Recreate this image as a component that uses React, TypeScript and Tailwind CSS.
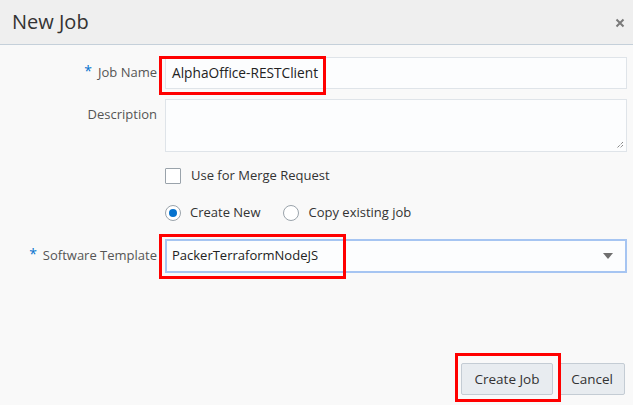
import React from "react";

export default function App() {
  return (
    <div
      className="relative w-[633px] h-[405px] overflow-hidden bg-[#f9f9f9] text-[#333]"
      style={{ fontFamily: '"Open Sans", "Noto Sans", sans-serif' }}
    >
      <div className="h-[45px] bg-[#efefef] border-b border-[#c5d0da] flex items-center justify-between pl-[12px] pr-[8px]">
        <div className="text-[20px] text-[#333]">New Job</div>
        <svg width="10" height="10" viewBox="0 0 10 10" className="mt-[1px]">
          <path d="M1.5 1.5 L8.5 8.5 M8.5 1.5 L1.5 8.5" stroke="#7a7a7a" strokeWidth="2" />
        </svg>
      </div>

      <div className="grid grid-cols-[157px_1fr] gap-x-[8px] pr-[6px] text-[13px]">
        <div className="mt-[12px] h-[32px] flex items-center justify-end text-[#555]">
          <span className="text-[#0572ce] text-[14px] mr-[6px] -mt-[6px]">*</span>Job Name
        </div>
        <div className="mt-[12px] h-[32px] border border-[#dfe4e9] bg-[#fcfdfe] flex items-center px-[6px] text-[13.7px] text-[#222]">
          AlphaOffice-RESTClient
        </div>

        <div className="mt-[10px] h-[32px] flex items-center justify-end text-[#555]">Description</div>
        <div className="mt-[10px] h-[53px] border border-[#dfe4e9] bg-[#fcfdfe] relative">
          <svg width="8" height="8" viewBox="0 0 8 8" className="absolute right-[2px] bottom-[2px]">
            <path d="M7 1 L1 7 M7 4 L4 7" stroke="#555" strokeWidth="1" strokeDasharray="1 1" />
          </svg>
        </div>

        <div />
        <div className="mt-[16px] h-[15px] flex items-center gap-[10px] text-[#333]">
          <span className="w-[16px] h-[16px] border border-[#9aa3ab] bg-white rounded-[1px]" />
          Use for Merge Request
        </div>

        <div />
        <div className="mt-[22px] h-[16px] flex items-center text-[#333]">
          <span className="w-[16px] h-[16px] rounded-full border border-[#9aa3ab] bg-white flex items-center justify-center">
            <span className="w-[8px] h-[8px] rounded-full bg-[#0572ce]" />
          </span>
          <span className="ml-[9px]">Create New</span>
          <span className="ml-[22px] w-[16px] h-[16px] rounded-full border border-[#9aa3ab] bg-white" />
          <span className="ml-[10px]">Copy existing job</span>
        </div>

        <div className="mt-[18px] h-[34px] flex items-center justify-end text-[#555]">
          <span className="text-[#0572ce] text-[14px] mr-[6px] -mt-[6px]">*</span>Software Template
        </div>
        <div className="mt-[18px] h-[34px] border-2 border-[#a6c5f2] bg-[#fcfdfe] flex items-center justify-between pl-[5px] pr-[12px] text-[13px] text-[#222]">
          <span>PackerTerraformNodeJS</span>
          <svg width="10" height="6" viewBox="0 0 10 6">
            <path d="M0 0 L10 0 L5 6 Z" fill="#6f6f6f" />
          </svg>
        </div>
      </div>

      <div className="mt-[90px] flex justify-end gap-[6px] pr-[8px] text-[13.5px]">
        <button className="h-[32px] w-[92px] border border-[#c4ccd4] bg-[#e8ecf0] rounded-[2px] text-[#333]">
          Create Job
        </button>
        <button className="h-[32px] w-[66px] border border-[#c4ccd4] bg-[#e8ecf0] rounded-[2px] text-[#333]">
          Cancel
        </button>
      </div>

      <div className="absolute left-[159px] top-[56px] w-[167px] h-[39px] border-[3px] border-[#ff0000]" />
      <div className="absolute left-[159px] top-[234px] w-[187px] h-[45px] border-[3px] border-[#ff0000]" />
      <div className="absolute left-[455px] top-[353px] w-[106px] h-[49px] border-[3px] border-[#ff0000]" />
    </div>
  );
}
